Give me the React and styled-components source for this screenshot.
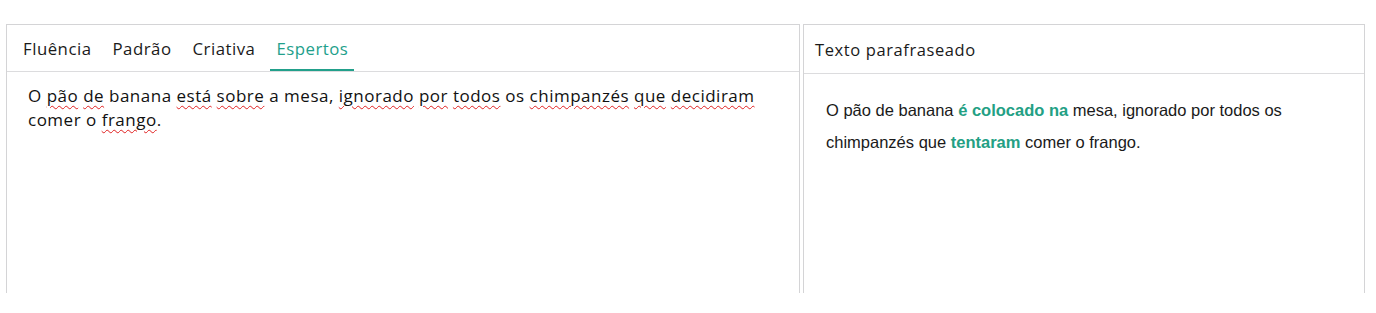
import React, { useState } from "react";
import styled, { createGlobalStyle } from "styled-components";

const GlobalStyle = createGlobalStyle`
  html, body {
    margin: 0;
    padding: 0;
    background: #ffffff;
  }
`;

const tabs = ["Fluência", "Padrão", "Criativa", "Espertos"];

const original = [
  { text: "O " },
  { text: "pão", flag: true },
  { text: " " },
  { text: "de", flag: true },
  { text: " banana " },
  { text: "está", flag: true },
  { text: " " },
  { text: "sobre", flag: true },
  { text: " a mesa, " },
  { text: "ignorado", flag: true },
  { text: " " },
  { text: "por", flag: true },
  { text: " " },
  { text: "todos", flag: true },
  { text: " os " },
  { text: "chimpanzés", flag: true },
  { text: " " },
  { text: "que", flag: true },
  { text: " " },
  { text: "decidiram", flag: true },
  { text: " comer o " },
  { text: "frango", flag: true },
  { text: "." },
];

const App = () => {
  const [active, setActive] = useState(3);

  return (
    <>
      <GlobalStyle />
      <Page>
        <EditorPanel>
          <TabBar>
            {tabs.map((tab, index) => (
              <Tab
                key={tab}
                active={index === active}
                onClick={() => setActive(index)}
              >
                {tab}
              </Tab>
            ))}
          </TabBar>
          <InputText>
            {original.map((part, index) =>
              part.flag ? (
                <Misspelled key={index}>{part.text}</Misspelled>
              ) : (
                <React.Fragment key={index}>{part.text}</React.Fragment>
              )
            )}
          </InputText>
        </EditorPanel>
        <ResultPanel>
          <ResultHeader>Texto parafraseado</ResultHeader>
          <ResultText>
            O pão de banana <Changed>é colocado na</Changed> mesa, ignorado por
            todos os chimpanzés que <Changed>tentaram</Changed> comer o frango.
          </ResultText>
        </ResultPanel>
      </Page>
    </>
  );
};

const Page = styled.div`
  display: flex;
  gap: 3px;
  padding: 24px 11px 0 6px;
  height: 313px;
  box-sizing: border-box;
`;

const EditorPanel = styled.section`
  flex: 0 0 794px;
  height: 269px;
  box-sizing: border-box;
  border: 1px solid #d4d4d6;
  border-bottom: none;
  display: flex;
  flex-direction: column;
`;

const TabBar = styled.div`
  display: flex;
  gap: 9px;
  padding: 0 10px;
  height: 46px;
  border-bottom: 1px solid #dcdcde;
`;

const Tab = styled.button`
  font-family: "Open Sans", sans-serif;
  font-size: 16.8px;
  letter-spacing: 0.5px;
  color: ${(props) => (props.active ? "#22a08b" : "#1a1a1a")};
  background: none;
  border: none;
  border-bottom: 2px solid
    ${(props) => (props.active ? "#22a08b" : "transparent")};
  padding: 2px 6px 0;
  cursor: pointer;
`;

const InputText = styled.div`
  font-family: "Open Sans", sans-serif;
  font-size: 17px;
  line-height: 24px;
  color: #111;
  padding: 12px 21px;
  letter-spacing: 0.5px;
`;

const Misspelled = styled.span`
  text-decoration: underline wavy #e02020;
  text-decoration-thickness: 1px;
  text-underline-offset: 3px;
`;

const ResultPanel = styled.section`
  flex: 0 0 562px;
  height: 269px;
  box-sizing: border-box;
  border: 1px solid #d4d4d6;
  border-bottom: none;
  display: flex;
  flex-direction: column;
`;

const ResultHeader = styled.div`
  font-family: "Open Sans", sans-serif;
  font-size: 16.5px;
  color: #1a1a1a;
  height: 48px;
  padding: 0 11px;
  display: flex;
  align-items: center;
  border-bottom: 1px solid #dcdcde;
  letter-spacing: 0.6px;
`;

const ResultText = styled.div`
  font-family: "Liberation Sans", Arial, sans-serif;
  font-size: 16.5px;
  line-height: 32px;
  color: #1a1a1a;
  padding: 20px 21px 0 22px;
`;

const Changed = styled.strong`
  color: #23a084;
  font-weight: bold;
`;

export default App;
